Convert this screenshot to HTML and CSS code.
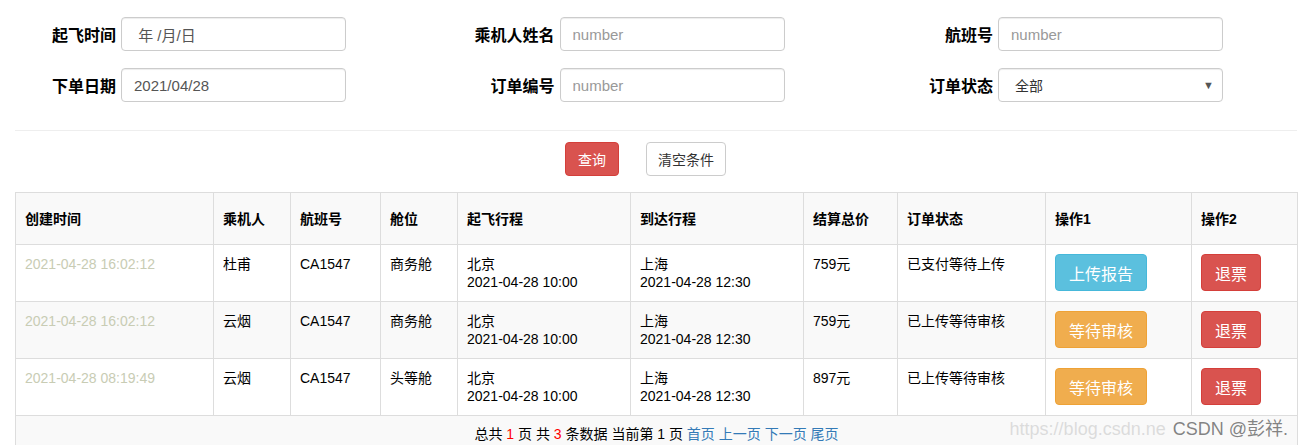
FILE: index.html
```html
<!DOCTYPE html>
<html>

<head>
    <title>订单管理</title>
    <link rel="stylesheet" href="styles.css">
</head>

<body>
    <div class="container">
        <!-- 查询条件 -->
        <form class="search-form">
            <div class="form-group">
                <label>起飞时间</label>
                <input type="text" class="form-control dark" value=" 年 /月/日" />
            </div>
            <div class="form-group">
                <label>乘机人姓名</label>
                <input type="text" class="form-control" placeholder="number" />
            </div>
            <div class="form-group">
                <label>航班号</label>
                <input type="text" class="form-control" placeholder="number" />
            </div>
            <div class="form-group">
                <label>下单日期</label>
                <input type="text" class="form-control dark" value="2021/04/28" />
            </div>
            <div class="form-group">
                <label>订单编号</label>
                <input type="text" class="form-control" placeholder="number" />
            </div>
            <div class="form-group">
                <label>订单状态</label>
                <div class="form-control select">
                    <span>全部</span>
                    <span class="caret">&#9660;</span>
                </div>
            </div>
        </form>

        <hr>

        <div class="search-buttons">
            <button type="button" class="btn btn-danger">查询</button>
            <button type="button" class="btn btn-default">清空条件</button>
        </div>

        <!-- 订单列表 -->
        <table class="order-table">
            <colgroup>
                <col style="width:198px">
                <col style="width:77px">
                <col style="width:90px">
                <col style="width:77px">
                <col style="width:173px">
                <col style="width:173px">
                <col style="width:94px">
                <col style="width:148px">
                <col style="width:146px">
                <col style="width:106px">
            </colgroup>
            <thead>
                <tr>
                    <th>创建时间</th>
                    <th>乘机人</th>
                    <th>航班号</th>
                    <th>舱位</th>
                    <th>起飞行程</th>
                    <th>到达行程</th>
                    <th>结算总价</th>
                    <th>订单状态</th>
                    <th>操作1</th>
                    <th>操作2</th>
                </tr>
            </thead>
            <tbody>
                <tr>
                    <td class="created">2021-04-28 16:02:12</td>
                    <td>杜甫</td>
                    <td>CA1547</td>
                    <td>商务舱</td>
                    <td>北京<br>2021-04-28 10:00</td>
                    <td>上海<br>2021-04-28 12:30</td>
                    <td>759元</td>
                    <td>已支付等待上传</td>
                    <td><button class="btn-lg btn-info">上传报告</button></td>
                    <td><button class="btn-lg btn-danger">退票</button></td>
                </tr>
                <tr class="striped">
                    <td class="created">2021-04-28 16:02:12</td>
                    <td>云烟</td>
                    <td>CA1547</td>
                    <td>商务舱</td>
                    <td>北京<br>2021-04-28 10:00</td>
                    <td>上海<br>2021-04-28 12:30</td>
                    <td>759元</td>
                    <td>已上传等待审核</td>
                    <td><button class="btn-lg btn-warning">等待审核</button></td>
                    <td><button class="btn-lg btn-danger">退票</button></td>
                </tr>
                <tr>
                    <td class="created">2021-04-28 08:19:49</td>
                    <td>云烟</td>
                    <td>CA1547</td>
                    <td>头等舱</td>
                    <td>北京<br>2021-04-28 10:00</td>
                    <td>上海<br>2021-04-28 12:30</td>
                    <td>897元</td>
                    <td>已上传等待审核</td>
                    <td><button class="btn-lg btn-warning">等待审核</button></td>
                    <td><button class="btn-lg btn-danger">退票</button></td>
                </tr>
                <tr class="pager">
                    <td colspan="10">
                        总共 <span class="num">1</span> 页 共 <span class="num">3</span> 条数据 当前第 1 页
                        <a href="#">首页</a> <a href="#">上一页</a> <a href="#">下一页</a> <a href="#">尾页</a>
                    </td>
                </tr>
            </tbody>
        </table>
    </div>

    <!-- 水印 -->
    <div class="watermark">
        <span class="wm-url">https://blog.csdn.ne</span>
        <span class="wm-name">CSDN @彭祥.</span>
    </div>
</body>

</html>
```

FILE: styles.css
```css
/* 页面基础 */
body {
    font-family: "Liberation Sans", "Noto Sans CJK SC", sans-serif;
    font-size: 14px;
    color: #000;
    margin: 0;
    height: 445px;
    overflow: hidden;
    position: relative;
}
.container {
    padding: 17px 5px 0 15px;
}

/* 查询表单 */
.search-form {
    display: grid;
    grid-template-columns: repeat(3, 438.5px);
    row-gap: 17px;
}
.form-group {
    display: flex;
    align-items: center;
}
.form-group label {
    width: 101px;
    margin-right: 5px;
    text-align: right;
    font-weight: bold;
    font-size: 16px;
    white-space: nowrap;
}
.form-control {
    box-sizing: border-box;
    width: 225px;
    height: 34px;
    padding: 0 12px;
    border: 1px solid #ccc;
    border-radius: 4px;
    box-shadow: inset 0 1px 1px rgba(0, 0, 0, 0.075);
    font-family: inherit;
    font-size: 15px;
    color: #555;
    background: #fff;
}
.form-control::placeholder {
    color: #999;
}
.form-control.dark {
    color: #555;
}
.select {
    display: flex;
    align-items: center;
    justify-content: space-between;
    font-size: 14px;
    color: #333;
    padding: 0 8px 0 16px;
}
.caret {
    font-size: 11px;
    color: #555;
}

hr {
    border: 0;
    border-top: 1px solid #eee;
    margin: 28px 0 11px 0;
}

/* 查询按钮 */
.search-buttons {
    display: flex;
    justify-content: center;
    gap: 27px;
    padding-right: 21px;
    margin-bottom: 16px;
}
.btn {
    height: 34px;
    padding: 0 12px;
    border-radius: 4px;
    font-family: inherit;
    font-size: 14px;
    cursor: pointer;
}
.btn-default {
    background: #fff;
    border: 1px solid #ccc;
    color: #333;
    padding: 0 11px;
}
.btn-danger {
    background: #d9534f;
    border: 1px solid #d43f3a;
    color: #fff;
}

/* 订单表格 */
.order-table {
    width: 1282px;
    table-layout: fixed;
    border-collapse: collapse;
}
.order-table th,
.order-table td {
    border: 1px solid #ddd;
    text-align: left;
    line-height: 18px;
}
.order-table th {
    background: #f9f9f9;
    height: 51px;
    padding: 0 9px;
    font-size: 14px;
    font-weight: bold;
}
.order-table td {
    height: 57px;
    box-sizing: border-box;
    padding: 10px 9px 0 9px;
    vertical-align: top;
}
.order-table tr.striped td {
    background: #f9f9f9;
}
.order-table td.created {
    color: #c8ccb4;
}
.btn-lg {
    height: 37px;
    padding: 0 13px;
    margin-top: -1px;
    border-radius: 4px;
    font-family: inherit;
    font-size: 16px;
    color: #fff;
    cursor: pointer;
}
.btn-info {
    background: #5bc0de;
    border: 1px solid #46b8da;
}
.btn-warning {
    background: #f0ad4e;
    border: 1px solid #eea236;
}

/* 分页 */
.order-table tr.pager td {
    background: #f9f9f9;
    text-align: center;
    height: 40px;
    padding-top: 9px;
}
.pager .num {
    color: red;
}
.pager a {
    color: #337ab7;
    text-decoration: none;
}

/* 水印 */
.watermark {
    position: absolute;
    right: 14px;
    top: 414px;
    font-size: 18px;
    white-space: nowrap;
}
.wm-url {
    color: rgba(200, 200, 200, 0.6);
}
.wm-name {
    color: rgba(110, 110, 110, 0.85);
    margin-left: 2px;
}
```
